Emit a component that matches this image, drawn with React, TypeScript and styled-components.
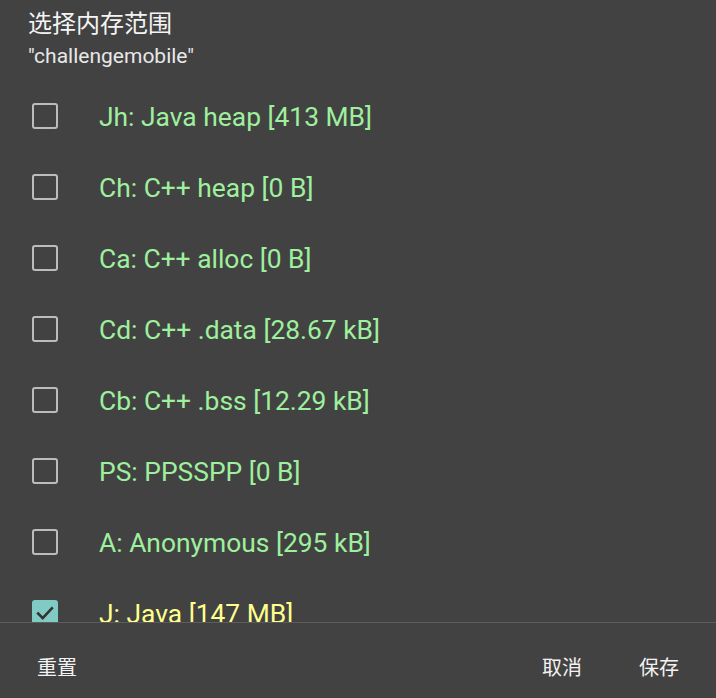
import React, { useState } from "react";
import styled, { createGlobalStyle } from "styled-components";

const GlobalStyle = createGlobalStyle`
  html, body {
    margin: 0;
    padding: 0;
    background: #424242;
    overflow: hidden;
  }
  body {
    font-family: Roboto, "Noto Sans CJK SC", sans-serif;
  }
`;

const Dialog = styled.div`
  display: flex;
  flex-direction: column;
  height: 100vh;
  background: #424242;
  color: #f2f2f2;
`;

const Header = styled.header`
  padding: 8px 28px 0;
`;

const Title = styled.h1`
  margin: 0;
  font-family: Roboto, "Noto Sans CJK SC", sans-serif;
  font-weight: 400;
  font-size: 24px;
  line-height: 32px;
  color: #f4f4f4;
`;

const Subtitle = styled.div`
  margin-top: 4px;
  font-size: 21px;
  line-height: 24px;
  color: #e8e8e8;
`;

const List = styled.div`
  flex: 1;
  overflow: hidden;
  margin-top: 14px;
  border-bottom: 1px solid #5c5c5c;
`;

const Row = styled.label`
  display: flex;
  align-items: center;
  height: 71px;
  padding-left: 32px;
  cursor: pointer;
`;

const Box = styled.span<{ $checked: boolean }>`
  box-sizing: border-box;
  width: 26px;
  height: 26px;
  margin-bottom: 4px;
  flex-shrink: 0;
  border-radius: 3px;
  border: ${(p) => (p.$checked ? "none" : "2.5px solid #bcbcbc")};
  background: ${(p) => (p.$checked ? "#80cbc4" : "transparent")};
  display: flex;
  align-items: center;
  justify-content: center;
`;

const Label = styled.span<{ $checked: boolean }>`
  margin-left: 41px;
  font-size: 26.4px;
  line-height: 71px;
  color: ${(p) => (p.$checked ? "#ffff8d" : "#9ef09e")};
  white-space: nowrap;
`;

const Footer = styled.footer`
  display: flex;
  align-items: center;
  justify-content: space-between;
  height: 75px;
  box-sizing: border-box;
  padding: 11px 27px 0;
  flex-shrink: 0;
`;

const ButtonGroup = styled.div`
  display: flex;
  gap: 37px;
`;

const TextButton = styled.button`
  background: none;
  border: none;
  padding: 0 10px;
  height: 64px;
  font-family: Roboto, "Noto Sans CJK SC", sans-serif;
  font-size: 20px;
  color: #f2f2f2;
  cursor: pointer;
`;

const ranges = [
  { id: "Jh", text: "Jh: Java heap [413 MB]", checked: false },
  { id: "Ch", text: "Ch: C++ heap [0 B]", checked: false },
  { id: "Ca", text: "Ca: C++ alloc [0 B]", checked: false },
  { id: "Cd", text: "Cd: C++ .data [28.67 kB]", checked: false },
  { id: "Cb", text: "Cb: C++ .bss [12.29 kB]", checked: false },
  { id: "PS", text: "PS: PPSSPP [0 B]", checked: false },
  { id: "A", text: "A: Anonymous [295 kB]", checked: false },
  { id: "J", text: "J: Java [147 MB]", checked: true },
];

const Check = () => (
  <svg width="22" height="22" viewBox="0 0 24 24">
    <path d="M4.5 12.5l5 5L19.5 7" fill="none" stroke="#333" strokeWidth="2.8" strokeLinecap="square" />
  </svg>
);

const App: React.FC = () => {
  const [items, setItems] = useState(ranges);

  const toggle = (id: string) =>
    setItems(items.map((r) => (r.id === id ? { ...r, checked: !r.checked } : r)));

  return (
    <Dialog>
      <GlobalStyle />
      <Header>
        <Title>选择内存范围</Title>
        <Subtitle>"challengemobile"</Subtitle>
      </Header>
      <List>
        {items.map((r) => (
          <Row key={r.id} onClick={() => toggle(r.id)}>
            <Box $checked={r.checked}>{r.checked && <Check />}</Box>
            <Label $checked={r.checked}>{r.text}</Label>
          </Row>
        ))}
      </List>
      <Footer>
        <TextButton onClick={() => setItems(ranges)}>重置</TextButton>
        <ButtonGroup>
          <TextButton>取消</TextButton>
          <TextButton>保存</TextButton>
        </ButtonGroup>
      </Footer>
    </Dialog>
  );
};

export default App;
